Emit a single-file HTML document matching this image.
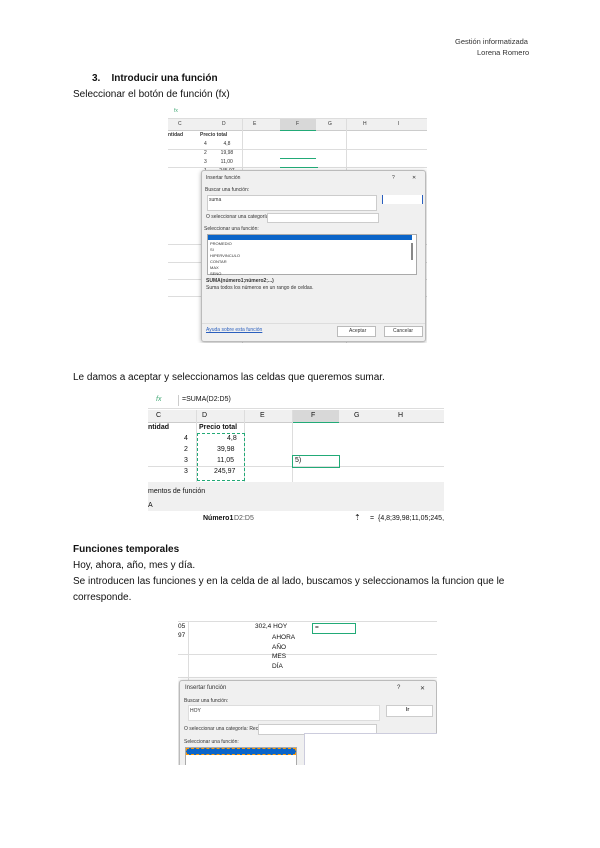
<!DOCTYPE html>
<html><head><meta charset="utf-8"><style>
body{margin:0;width:600px;height:848px;background:#fff;position:relative;font-family:"Liberation Sans",sans-serif;color:#111;overflow:hidden}
.t{position:absolute;font-size:10px;white-space:nowrap}
.a{position:absolute}
.g{background:#f0f0f0}
.s{font-size:5px;color:#333;position:absolute;white-space:nowrap}
</style></head><body>
<div class="t" style="left:455px;top:37px;font-size:7.5px;color:#333">Gestión informatizada</div>
<div class="t" style="left:477px;top:48px;font-size:7.5px;color:#333">Lorena Romero</div>
<div class="t" style="left:92px;top:73px;font-weight:bold">3.&nbsp;&nbsp;&nbsp;&nbsp;Introducir una función</div>
<div class="t" style="left:73px;top:89px">Seleccionar el botón de función (fx)</div>

<!-- image 1 -->
<div class="a" style="left:168px;top:104px;width:259px;height:239px;background:#fff;overflow:hidden">
 <div class="a" style="left:0;top:0;width:259px;height:14px;background:#fff;border-bottom:1px solid #ddd"></div>
 <div class="s" style="left:6px;top:4px;color:#4a7">fx</div>
 <div class="a" style="left:0;top:15px;width:259px;height:11px" class="g"></div>
 <div class="a g" style="left:0;top:15px;width:259px;height:11px;border-bottom:1px solid #ccc"></div>
 <div class="a" style="left:112px;top:15px;width:36px;height:11px;background:#d8d8d8;border-bottom:1px solid #2a7"></div>
 <div class="s" style="left:10px;top:17px">C</div><div class="s" style="left:54px;top:17px">D</div><div class="s" style="left:85px;top:17px">E</div><div class="s" style="left:128px;top:17px">F</div><div class="s" style="left:160px;top:17px">G</div><div class="s" style="left:195px;top:17px">H</div><div class="s" style="left:230px;top:17px">I</div>
 <div class="a" style="left:74px;top:15px;width:1px;height:224px;background:#ddd"></div>
 <div class="a" style="left:178px;top:15px;width:1px;height:224px;background:#ddd"></div>
 <div class="s" style="left:0;top:28px;font-weight:bold">ntidad</div><div class="s" style="left:32px;top:28px;font-weight:bold">Precio total</div>
 <div class="s" style="left:36px;top:37px">4&nbsp;&nbsp;&nbsp;&nbsp;&nbsp;&nbsp;&nbsp;&nbsp;&nbsp;&nbsp;&nbsp;&nbsp;4,8</div>
 <div class="s" style="left:36px;top:46px">2&nbsp;&nbsp;&nbsp;&nbsp;&nbsp;&nbsp;&nbsp;&nbsp;&nbsp;&nbsp;19,98</div>
 <div class="s" style="left:36px;top:55px">3&nbsp;&nbsp;&nbsp;&nbsp;&nbsp;&nbsp;&nbsp;&nbsp;&nbsp;&nbsp;11,00</div>
 <div class="s" style="left:36px;top:64px">1&nbsp;&nbsp;&nbsp;&nbsp;&nbsp;&nbsp;&nbsp;&nbsp;&nbsp;245,97</div>
 <div class="a" style="left:0;top:45px;width:259px;height:1px;background:#ddd"></div>
 <div class="a" style="left:0;top:63px;width:259px;height:1px;background:#ddd"></div>
 <div class="a" style="left:112px;top:54px;width:36px;height:1px;background:#2a7"></div>
 <div class="a" style="left:112px;top:63px;width:38px;height:1px;background:#2a7"></div>
 <div class="a" style="left:0;top:140px;width:259px;height:1px;background:#ddd"></div>
 <div class="a" style="left:0;top:158px;width:259px;height:1px;background:#ddd"></div>
 <div class="a" style="left:0;top:175px;width:259px;height:1px;background:#ddd"></div>
 <div class="a" style="left:0;top:192px;width:259px;height:1px;background:#ddd"></div>
 <div class="a g" style="left:33px;top:66px;width:223px;height:170px;border:1px solid #bbb;border-radius:3px;box-shadow:0 1px 4px rgba(0,0,0,.3)">
  <div class="s" style="left:4px;top:4px">Insertar función</div><div class="s" style="left:190px;top:4px">?</div><div class="s" style="left:210px;top:4px">✕</div>
  <div class="s" style="left:3px;top:16px">Buscar una función:</div>
  <div class="a" style="left:5px;top:24px;width:168px;height:14px;background:#fff;border:1px solid #ccc"></div>
  <div class="s" style="left:7px;top:26px">suma</div>
  <div class="a" style="left:180px;top:24px;width:39px;height:9px;background:#fff;border-left:1px solid #2a5fbe;border-right:1px solid #2a5fbe"></div>
  <div class="s" style="left:4px;top:43px">O seleccionar una categoría: Usadas recientemente</div>
  <div class="a" style="left:65px;top:42px;width:110px;height:8px;background:#fff;border:1px solid #ccc"></div>
  <div class="s" style="left:2px;top:55px">Seleccionar una función:</div>
  <div class="a" style="left:5px;top:63px;width:208px;height:39px;background:#fff;border:1px solid #aaa"></div>
  <div class="a" style="left:6px;top:64px;width:204px;height:5px;background:#0a64c8"></div>
  <div class="s" style="left:8px;top:70px;line-height:6px;font-size:4px">PROMEDIO<br>SI<br>HIPERVINCULO<br>CONTAR<br>MAX<br>SENO</div>
  <div class="a" style="left:209px;top:72px;width:2px;height:17px;background:#888"></div>
  <div class="s" style="left:4px;top:107px;font-weight:bold">SUMA(número1;número2;...)</div>
  <div class="s" style="left:4px;top:114px">Suma todos los números en un rango de celdas.</div>
  <div class="a" style="left:0;top:152px;width:223px;height:1px;background:#ddd"></div>
  <div class="s" style="left:4px;top:156px;color:#2a5fbe;text-decoration:underline">Ayuda sobre esta función</div>
  <div class="a" style="left:135px;top:155px;width:37px;height:9px;background:#fff;border:1px solid #bbb"></div>
  <div class="a" style="left:182px;top:155px;width:37px;height:9px;background:#fff;border:1px solid #bbb"></div>
  <div class="s" style="left:147px;top:157px">Aceptar</div><div class="s" style="left:191px;top:157px">Cancelar</div>
 </div>
</div>

<div class="t" style="left:73px;top:372px">Le damos a aceptar y seleccionamos las celdas que queremos sumar.</div>

<!-- image 2 -->
<div class="a" style="left:148px;top:393px;width:296px;height:135px;background:#fff;overflow:hidden;font-size:7px">
 <div class="a" style="left:0;top:0;width:296px;height:15px;border-bottom:1px solid #ddd"></div>
 <div class="t" style="left:8px;top:3px;font-size:7px;color:#4a7;font-style:italic">fx</div>
 <div class="a" style="left:30px;top:2px;width:1px;height:11px;background:#ccc"></div>
 <div class="t" style="left:34px;top:3px;font-size:7px">=SUMA(D2:D5)</div>
 <div class="a g" style="left:0;top:17px;width:296px;height:12px;border-bottom:1px solid #ccc"></div>
 <div class="a" style="left:144px;top:17px;width:47px;height:12px;background:#d8d8d8;border-bottom:1px solid #2a7"></div>
 <div class="t" style="left:8px;top:19px;font-size:7px">C</div><div class="t" style="left:54px;top:19px;font-size:7px">D</div><div class="t" style="left:112px;top:19px;font-size:7px">E</div><div class="t" style="left:163px;top:19px;font-size:7px">F</div><div class="t" style="left:206px;top:19px;font-size:7px">G</div><div class="t" style="left:250px;top:19px;font-size:7px">H</div>
 <div class="a" style="left:96px;top:17px;width:1px;height:72px;background:#ddd"></div>
 <div class="a" style="left:144px;top:17px;width:1px;height:72px;background:#ddd"></div>
 <div class="a" style="left:48px;top:17px;width:1px;height:72px;background:#ddd"></div>
 <div class="t" style="left:0;top:31px;font-size:7px;font-weight:bold">ntidad</div><div class="t" style="left:51px;top:31px;font-size:7px;font-weight:bold">Precio total</div>
 <div class="t" style="left:36px;top:42px;font-size:7px">4</div><div class="t" style="left:79px;top:42px;font-size:7px">4,8</div>
 <div class="t" style="left:36px;top:53px;font-size:7px">2</div><div class="t" style="left:69px;top:53px;font-size:7px">39,98</div>
 <div class="t" style="left:36px;top:64px;font-size:7px">3</div><div class="t" style="left:69px;top:64px;font-size:7px">11,05</div>
 <div class="t" style="left:36px;top:75px;font-size:7px">3</div><div class="t" style="left:66px;top:75px;font-size:7px">245,97</div>
 <div class="a" style="left:0;top:73px;width:296px;height:1px;background:#ddd"></div>
 <div class="a" style="left:49px;top:40px;width:46px;height:46px;border:1px dashed #2a7"></div>
 <div class="a" style="left:144px;top:62px;width:46px;height:11px;border:1px solid #2a7"></div>
 <div class="t" style="left:147px;top:64px;font-size:7px">5)</div>
 <div class="a g" style="left:0;top:89px;width:296px;height:46px"></div>
 <div class="t" style="left:0;top:95px;font-size:7px">mentos de función</div>
 <div class="t" style="left:0;top:109px;font-size:7px">A</div>
 <div class="a" style="left:0;top:118px;width:296px;height:17px;background:#fff"></div>
 <div class="t" style="left:55px;top:122px;font-size:7px;font-weight:bold">Número1</div>
 <div class="t" style="left:86px;top:122px;font-size:7px;color:#555">D2:D5</div>
 <div class="t" style="left:206px;top:120px;font-size:8px">⇡</div>
 <div class="t" style="left:222px;top:122px;font-size:7px">=&nbsp;&nbsp;{4,8;39,98;11,05;245,97}</div>
</div>

<div class="t" style="left:73px;top:544px;font-weight:bold">Funciones temporales</div>
<div class="t" style="left:73px;top:560px">Hoy, ahora, año, mes y día.</div>
<div class="t" style="left:73px;top:576px">Se introducen las funciones y en la celda de al lado, buscamos y seleccionamos la funcion que le</div>
<div class="t" style="left:73px;top:592px">corresponde.</div>

<!-- image 3 -->
<div class="a" style="left:178px;top:618px;width:259px;height:147px;background:#fff;overflow:hidden">
 <div class="a" style="left:0;top:3px;width:259px;height:1px;background:#ddd"></div>
 <div class="a" style="left:10px;top:3px;width:1px;height:60px;background:#ddd"></div>
 <div class="a" style="left:0;top:36px;width:259px;height:1px;background:#ddd"></div>
 <div class="a" style="left:0;top:59px;width:259px;height:1px;background:#ddd"></div>
 <div class="t" style="left:0;top:5px;font-size:6.5px">05</div><div class="t" style="left:0;top:14px;font-size:6.5px">97</div>
 <div class="t" style="left:77px;top:5px;font-size:6.5px">302,4 HOY</div>
 <div class="t" style="left:94px;top:15px;font-size:6.5px;line-height:9.5px">AHORA<br>AÑO<br>MES<br>DÍA</div>
 <div class="a" style="left:134px;top:5px;width:42px;height:9px;border:1px solid #2a7"></div>
 <div class="t" style="left:137px;top:6px;font-size:6.5px">=</div>
 <div class="a g" style="left:1px;top:62px;width:256px;height:90px;border:1px solid #bbb;border-radius:3px;box-shadow:0 1px 4px rgba(0,0,0,.3)">
  <div class="s" style="left:5px;top:4px;font-size:6px">Insertar función</div><div class="s" style="left:217px;top:4px;font-size:6px">?</div><div class="s" style="left:240px;top:4px;font-size:6px">✕</div>
  <div class="s" style="left:4px;top:17px">Buscar una función:</div>
  <div class="a" style="left:8px;top:24px;width:190px;height:14px;background:#fff;border:1px solid #ddd"></div>
  <div class="s" style="left:10px;top:27px">HOY</div>
  <div class="a" style="left:206px;top:24px;width:45px;height:10px;background:#fff;border:1px solid #ccc"></div>
  <div class="s" style="left:226px;top:26px;font-weight:bold">Ir</div>
  <div class="s" style="left:4px;top:45px">O seleccionar una categoría: Recomendado</div>
  <div class="a" style="left:78px;top:43px;width:117px;height:9px;background:#fff;border:1px solid #ccc"></div>
  <div class="s" style="left:4px;top:58px">Seleccionar una función:</div>
  <div class="a" style="left:5px;top:66px;width:110px;height:24px;background:#fff;border:1px solid #aaa"></div>
  <div class="a" style="left:6px;top:67px;width:108px;height:5px;background:#0a64c8;border:1px dashed #f90"></div>
 </div>
 <div class="a" style="left:126px;top:115px;width:140px;height:40px;background:#fff;border:1px solid #ccd"></div>
</div>
</body></html>
